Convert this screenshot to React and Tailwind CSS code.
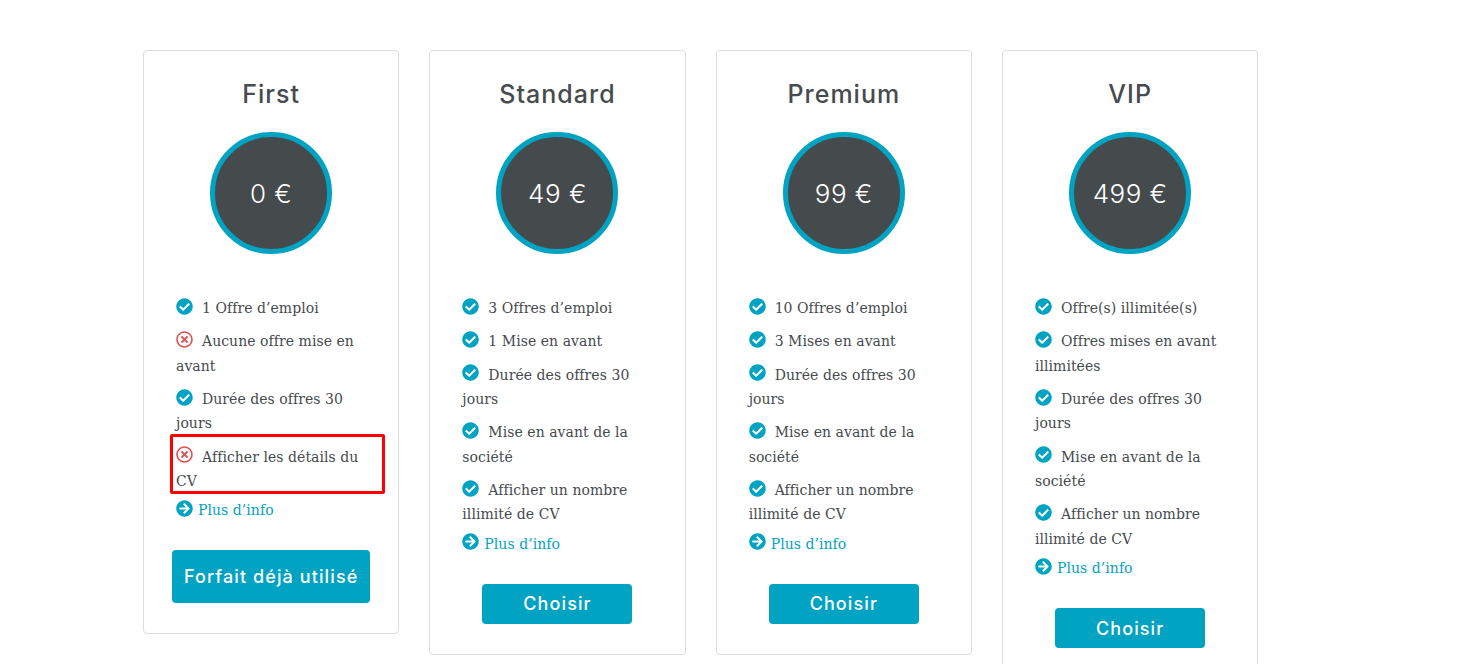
import React from 'react'
import { FaCheckCircle, FaRegTimesCircle, FaArrowCircleRight } from 'react-icons/fa'

const plans = [
    {
        name: 'First',
        price: '0 €',
        cta: 'Forfait déjà utilisé',
        features: [
            { ok: true, text: '1 Offre d’emploi' },
            { ok: false, text: 'Aucune offre mise en avant' },
            { ok: true, text: 'Durée des offres 30 jours' },
            { ok: false, text: 'Afficher les détails du CV', marked: true },
        ],
    },
    {
        name: 'Standard',
        price: '49 €',
        cta: 'Choisir',
        features: [
            { ok: true, text: '3 Offres d’emploi' },
            { ok: true, text: '1 Mise en avant' },
            { ok: true, text: 'Durée des offres 30 jours' },
            { ok: true, text: 'Mise en avant de la société' },
            { ok: true, text: 'Afficher un nombre illimité de CV' },
        ],
    },
    {
        name: 'Premium',
        price: '99 €',
        cta: 'Choisir',
        features: [
            { ok: true, text: '10 Offres d’emploi' },
            { ok: true, text: '3 Mises en avant' },
            { ok: true, text: 'Durée des offres 30 jours' },
            { ok: true, text: 'Mise en avant de la société' },
            { ok: true, text: 'Afficher un nombre illimité de CV' },
        ],
    },
    {
        name: 'VIP',
        price: '499 €',
        cta: 'Choisir',
        features: [
            { ok: true, text: 'Offre(s) illimitée(s)' },
            { ok: true, text: 'Offres mises en avant illimitées' },
            { ok: true, text: 'Durée des offres 30 jours' },
            { ok: true, text: 'Mise en avant de la société' },
            { ok: true, text: 'Afficher un nombre illimité de CV' },
        ],
    },
]

const Feature = ({ ok, text, marked }) => (
    <li className="relative mb-[9.1px] text-[14px] leading-[24.3px]">
        {ok ? (
            <FaCheckCircle className="inline-block w-[17px] h-[17px] mr-[9px] -mt-[6px] align-middle text-[#00a3c1]" />
        ) : (
            <FaRegTimesCircle className="inline-block w-[17px] h-[17px] mr-[9px] -mt-[6px] align-middle text-[#e05050]" />
        )}
        {text}
        {marked && (
            <div className="absolute -left-[6px] -top-[11px] w-[215px] h-[60px] border-[3px] border-[#ff0000] rounded-[2px]" />
        )}
    </li>
)

const Plan = ({ plan }) => (
    <div className="w-[256.33px] shrink-0 self-start bg-white border border-[#dddddd] rounded-[4px] px-[32px] pt-[27px] pb-[30px]">
        <h2 className="text-center text-[25px] leading-[32px] font-medium tracking-[1px] text-[#454b4e] font-['Inter',sans-serif]">
            {plan.name}
        </h2>
        <div className="mx-auto mt-[22px] w-[122px] h-[122px] rounded-full border-[5px] border-[#00a3c1] bg-[#454a4d] flex items-center justify-center text-white text-[26px] leading-[36px] pt-[2px] font-light tracking-[0.5px] font-['Inter',sans-serif]">
            {plan.price}
        </div>
        <ul className="mt-[42px] font-['DejaVu_Serif',serif] text-[#454b4e] tracking-[0.05px]">
            {plan.features.map((f) => (
                <Feature key={f.text} {...f} />
            ))}
            <li className="text-[14px] leading-[20px] -mt-[2px] text-[#00a3c1]">
                <FaArrowCircleRight className="inline-block w-[17px] h-[17px] mr-[5px] -mt-[6px] align-middle" />
                Plus d’info
            </li>
        </ul>
        <div className="mt-[30px] flex justify-center">
            <button className={`shrink-0 bg-[#00a3c1] text-white rounded-[4px] text-[18px] font-medium tracking-[1.1px] font-['Inter',sans-serif] ${plan.cta === 'Choisir' ? 'w-[150px] h-[40px]' : 'w-[198px] h-[53px]'}`}>
                {plan.cta}
            </button>
        </div>
    </div>
)

export default function App() {
    return (
        <div className="h-[664px] overflow-hidden bg-white">
            <div className="flex gap-[30px] pl-[143px] pt-[50px]">
                {plans.map((p) => (
                    <Plan key={p.name} plan={p} />
                ))}
            </div>
        </div>
    )
}
